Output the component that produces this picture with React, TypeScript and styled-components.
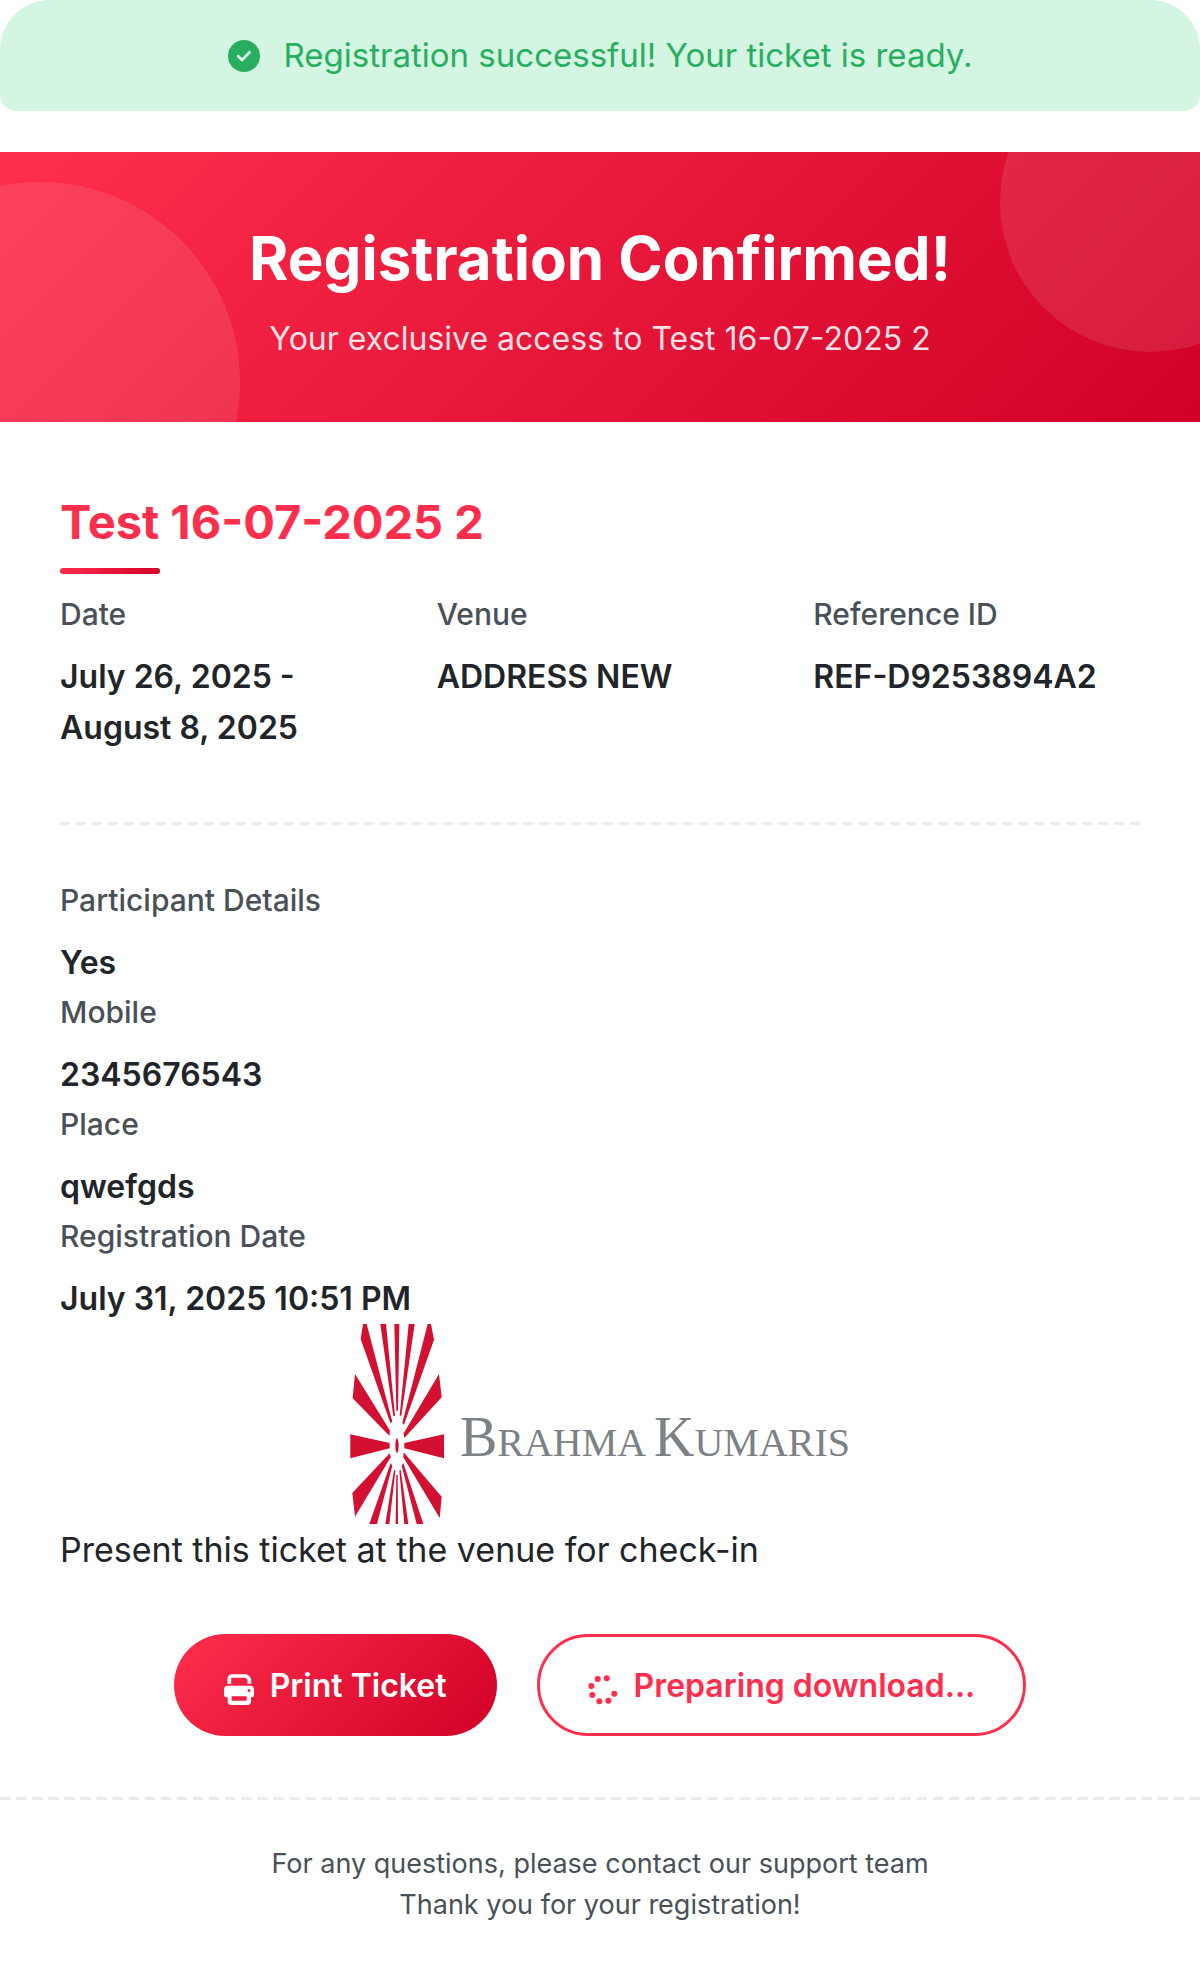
import React from "react";
import styled, { createGlobalStyle, css } from "styled-components";

const color = {
  primary: "#ff2e4c",
  primaryDark: "#d00027",
  text: "#212529",
  muted: "#495057",
  line: "#e9ecef",
  success: "#27ae60",
  successBg: "#d4f5e2",
  logoRed: "#d30f32",
  logoGrey: "#7b8184",
};

const gradient = `linear-gradient(135deg, ${color.primary}, ${color.primaryDark})`;

const GlobalStyle = createGlobalStyle`
  *, *::before, *::after { box-sizing: border-box; }
  body {
    margin: 0;
    background: #fff;
    color: ${color.text};
    font-family: Inter, "Open Sans", sans-serif;
    font-size: 32px;
    line-height: 51px;
  }
  h1, h2, p, dl, dd { margin: 0; }
`;

const Banner = styled.div`
  display: flex;
  align-items: center;
  justify-content: center;
  gap: 24px;
  margin-bottom: 41px;
  padding: 30px;
  border-radius: 50px 50px 16px 16px;
  background: ${color.successBg};
  color: ${color.success};
  font-size: 33px;

  svg {
    flex: none;
  }
`;

const Header = styled.header`
  position: relative;
  overflow: hidden;
  display: flex;
  flex-direction: column;
  gap: 21px;
  padding: 72px 60px 58px;
  background: ${gradient};
  color: #fff;
  text-align: center;
`;

const Bubble = styled.span<{ $corner: "left" | "right" }>`
  position: absolute;
  border-radius: 50%;
  background: rgba(255, 255, 255, 0.1);
  ${({ $corner }) =>
    $corner === "left"
      ? css`
          width: 400px;
          height: 400px;
          left: -160px;
          bottom: -160px;
        `
      : css`
          width: 300px;
          height: 300px;
          right: -100px;
          top: -100px;
        `}
`;

const Heading = styled.h1`
  position: relative;
  font-size: 60px;
  line-height: 68px;
  font-weight: 700;
`;

const SubHeading = styled.p`
  position: relative;
  color: rgba(255, 255, 255, 0.88);
`;

const Body = styled.main`
  padding: 72px 60px 61px;
`;

const EventTitle = styled.h2`
  color: ${color.primary};
  font-size: 47px;
  line-height: 56px;
  font-weight: 700;

  &::after {
    content: "";
    display: block;
    width: 100px;
    height: 6px;
    margin-top: 18px;
    border-radius: 3px;
    background: ${gradient};
  }
`;

const Facts = styled.dl`
  display: grid;
  grid-template-columns: repeat(3, 1fr);
  gap: 50px;
  padding: 16px 0 69px;
`;

const Details = styled.dl`
  padding-top: 51px;
`;

const Label = styled.dt`
  margin-bottom: 12px;
  color: ${color.muted};
  font-size: 30px;
  line-height: 49px;
  font-weight: 500;
`;

const Value = styled.dd`
  font-weight: 600;
`;

const DashedLine = styled.div`
  overflow: hidden;

  &::after {
    content: "";
    display: block;
    height: 3px;
    margin-right: -6px;
    background: linear-gradient(to right, ${color.line} 10px, transparent 10px) 0 0 / 16px 3px round;
  }
`;

const Logo = styled.div`
  display: flex;
  align-items: center;
  justify-content: center;
  gap: 16px;
`;

const Wordmark = styled.span`
  padding-top: 32px;
  color: ${color.logoGrey};
  font-family: "Liberation Serif", serif;
  font-size: 40px;
  white-space: nowrap;
`;

const Initial = styled.span`
  font-size: 56px;
`;

const Note = styled.p`
  font-size: 34px;
`;

const Actions = styled.div`
  display: flex;
  flex-wrap: wrap;
  justify-content: center;
  gap: 40px;
  margin-top: 59px;
`;

const Button = styled.button<{ $outline?: boolean }>`
  display: flex;
  align-items: center;
  gap: 16px;
  padding: 26px 50px 25px;
  border: 0;
  border-radius: 51px;
  background: ${gradient};
  color: #fff;
  font: inherit;
  font-weight: 600;
  cursor: pointer;

  ${({ $outline }) =>
    $outline &&
    css`
      padding: 23px 48px 22px;
      border: 3px solid ${color.primary};
      background: transparent;
      color: ${color.primary};
    `}

  svg {
    flex: none;
    margin-top: 8px;
  }
`;

const Footer = styled.footer`
  padding: 43px 60px 39px;
  color: ${color.muted};
  font-size: 27px;
  line-height: 41px;
  text-align: center;
`;

const CheckIcon = () => (
  <svg width="32" height="32" viewBox="0 0 32 32" aria-hidden="true">
    <circle cx="16" cy="16" r="16" fill={color.success} />
    <path
      d="M10.2 16.3 L14 20 L21.6 12.2"
      fill="none"
      stroke={color.successBg}
      strokeWidth="2.8"
      strokeLinecap="round"
      strokeLinejoin="round"
    />
  </svg>
);

const PrinterIcon = () => (
  <svg width="30" height="31" viewBox="24 27 90 93" fill="currentColor" aria-hidden="true">
    <path d="M40 56 V42 Q40 33 49 33 H88 Q91 33 93 35 L98 40 Q100 42 100 45 V56" fill="none" stroke="currentColor" strokeWidth="11" />
    <path
      fillRule="evenodd"
      d="M36 62 H102 Q114 62 114 74 V90 Q114 97 107 97 H105 V109 Q105 120 94 120 H46 Q35 120 35 109 V97 H31 Q24 97 24 90 V74 Q24 62 36 62 Z M47 94 V107 H92 V94 Z M99 72 A4.5 4.5 0 1 0 99 81 A4.5 4.5 0 1 0 99 72 Z"
    />
  </svg>
);

const spinnerDots = [
  [55, 42],
  [82, 40],
  [36, 63],
  [105, 86],
  [39, 90],
  [60, 109],
  [87, 107],
];

const SpinnerIcon = () => (
  <svg width="30" height="30" viewBox="26 30 90 90" fill="currentColor" aria-hidden="true">
    {spinnerDots.map(([x, y]) => (
      <circle key={`${x}-${y}`} cx={x} cy={y} r="9" />
    ))}
  </svg>
);

const rays = [
  "148,15 163,15 159,275 154,275",
  "106,15 123,15 150,290 145,292",
  "191,15 209,15 169,290 164,290",
  "54,15 65,15 142,308 136,312 47,60",
  "248,15 258,15 267,62 177,317 172,312",
  "30,165 135,335 133,350 23,238",
  "282,165 290,235 178,357 176,343",
  "16,346 134,372 134,388 16,418",
  "297,346 297,418 178,388 178,372",
  "134,403 137,415 30,593 22,522",
  "176,400 290,533 284,597 175,415",
  "137,432 142,440 96,615 73,615",
  "170,440 175,432 235,615 215,615",
  "147,452 151,455 133,615 121,615",
  "163,455 167,452 190,615 178,615",
  "154,468 158,468 159,615 152,615",
];

const RaysMark = () => (
  <svg width="94" height="200" viewBox="15 15 282 600" fill={color.logoRed} aria-hidden="true">
    {rays.map((points) => (
      <polygon key={points} points={points} />
    ))}
    <ellipse cx="156" cy="380" rx="5" ry="22" />
  </svg>
);

const facts = [
  ["Date", "July 26, 2025 - August 8, 2025"],
  ["Venue", "ADDRESS NEW"],
  ["Reference ID", "REF-D9253894A2"],
];

const details = [
  ["Participant Details", "Yes"],
  ["Mobile", "2345676543"],
  ["Place", "qwefgds"],
  ["Registration Date", "July 31, 2025 10:51 PM"],
];

const Fact = ({ label, value }: { label: string; value: string }) => (
  <div>
    <Label>{label}</Label>
    <Value>{value}</Value>
  </div>
);

export default function App() {
  return (
    <>
      <GlobalStyle />
      <Banner role="status">
        <CheckIcon />
        <span>Registration successful! Your ticket is ready.</span>
      </Banner>
      <Header>
        <Bubble $corner="left" />
        <Bubble $corner="right" />
        <Heading>Registration Confirmed!</Heading>
        <SubHeading>Your exclusive access to Test 16-07-2025 2</SubHeading>
      </Header>
      <Body>
        <EventTitle>Test 16-07-2025 2</EventTitle>
        <Facts>
          {facts.map(([label, value]) => (
            <Fact key={label} label={label} value={value} />
          ))}
        </Facts>
        <DashedLine />
        <Details>
          {details.map(([label, value]) => (
            <Fact key={label} label={label} value={value} />
          ))}
        </Details>
        <Logo>
          <RaysMark />
          <Wordmark>
            <Initial>B</Initial>RAHMA <Initial>K</Initial>UMARIS
          </Wordmark>
        </Logo>
        <Note>Present this ticket at the venue for check-in</Note>
        <Actions>
          <Button type="button">
            <PrinterIcon />
            Print Ticket
          </Button>
          <Button type="button" $outline>
            <SpinnerIcon />
            Preparing download...
          </Button>
        </Actions>
      </Body>
      <DashedLine />
      <Footer>
        <p>For any questions, please contact our support team</p>
        <p>Thank you for your registration!</p>
      </Footer>
    </>
  );
}
